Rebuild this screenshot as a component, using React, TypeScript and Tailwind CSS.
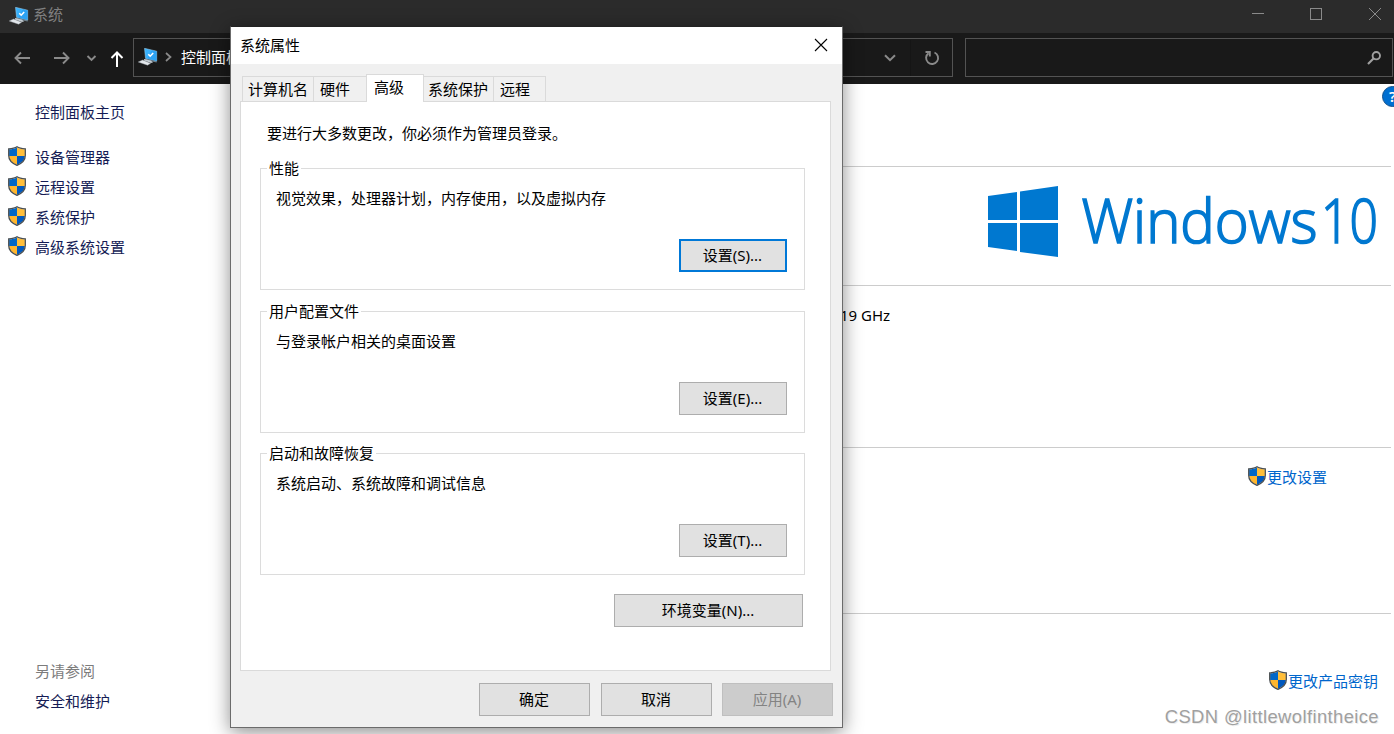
import type { ReactNode } from "react";

const ShieldIcon = () => (
  <svg width="18" height="20" viewBox="0 0 18 20" className="mb-[2px] shrink-0">
    <defs>
      <clipPath id="shield">
        <path d="M9 1.2C11 2.6 13.6 3.2 16.9 3.3V9.5C16.9 13.6 14 16.8 9 18.9C4 16.8 1.1 13.6 1.1 9.5V3.3C4.4 3.2 7 2.6 9 1.2Z" />
      </clipPath>
    </defs>
    <g clipPath="url(#shield)">
      <rect width="9" height="10" fill="#0067c8" />
      <rect x="9" width="9" height="10" fill="#ffbe3a" />
      <rect y="10" width="9" height="10" fill="#ffb62e" />
      <rect x="9" y="10" width="9" height="10" fill="#0058bd" />
    </g>
    <path
      d="M9 .8C11 2.2 13.6 2.7 17.3 2.8V9.5C17.3 13.8 14.2 17.2 9 19.3C3.8 17.2 .7 13.8 .7 9.5V2.8C4.4 2.7 7 2.2 9 .8Z"
      fill="none"
      stroke="#4a4f52"
      strokeWidth="1.3"
    />
  </svg>
);

const ComputerIcon = () => (
  <svg width="20" height="18" viewBox="0 0 20 18" className="mb-[2px] shrink-0">
    <path d="M6.5 .3L18.700 3.2V13.2L7.500 10.4Z" fill="#38b0fb" stroke="#a9d4ee" strokeWidth=".5" />
    <path d="M14 2.1L18.700 3.4V13L9 10.7Z" fill="#2499ee" opacity=".6" />
    <path d="M10.300 6.200L12.200 8.2L15.2 5" fill="none" stroke="#fff" strokeWidth="1.6" />
    <path d="M7 10.4L18.700 13.2V14.4L14 13.6L7 11.7Z" fill="#6d7f8b" />
    <path d="M6 10.9L12.5 12.6L15.2 14.2L13 15L6 12.6Z" fill="#c3ccd3" />
    <path d="M.2 14L4.6 12L12.6 15.3L9.600 17.2Z" fill="#e2e6ea" stroke="#9da5ac" strokeWidth=".4" />
  </svg>
);

const ChevronDown = () => (
  <svg width="12" height="8" viewBox="0 0 12 8" fill="none" stroke="#8a8a8a" strokeWidth="2">
    <path d="M1 1.2L6 6.2L11 1.2" />
  </svg>
);

const Button = ({ children, className }: { children: ReactNode; className: string }) => (
  <button className={`flex h-[33px] items-center justify-center pr-px pb-px ${className}`}>{children}</button>
);

const Group = ({ title, text, button, focused, className }: {
  title: string;
  text: string;
  button: string;
  focused?: boolean;
  className: string;
}) => (
  <section className={`flex h-[122px] w-[545px] flex-col border border-[#dcdcdc] ${className}`}>
    <h3 className="-mt-[11px] ml-[6px] h-5 self-start bg-white px-[2px] leading-5">{title}</h3>
    <p className="mt-[10px] ml-[15px] h-5 leading-5">{text}</p>
    <Button
      className={`mt-[31px] mr-[17px] w-[108px] self-end bg-[#e1e1e1] ${
        focused ? "border-2 border-[#0078d7]" : "border border-[#adadad]"
      }`}
    >
      {button}
    </Button>
  </section>
);

const sideLinks = ["设备管理器", "远程设置", "系统保护", "高级系统设置"];

const Toolbar = () => (
  <header className="text-[#8a8a8a]">
    <div className="flex h-[33px] items-center bg-[#2b2b2b] pl-[9px]">
      <ComputerIcon />
      <span className="ml-1 pb-[5px] text-[#808080]">系统</span>
      <svg className="mb-[5px] ml-auto" width="142" height="14" viewBox="0 0 142 14" fill="none" stroke="#8a8a8a">
        <path d="M0 6.5H12" />
        <rect x="58.5" y="1.5" width="11" height="11" />
        <path d="M117 1L129 13M129 1L117 13" />
      </svg>
    </div>
    <div className="flex h-[51px] items-center bg-[#191919] pb-[2px]">
      <svg width="133" height="20" viewBox="0 0 133 20" fill="none" stroke="#8a8a8a" strokeWidth="1.9">
        <path d="M30 10H15.5M21 4.5L15.5 10L21 15.5" />
        <path d="M54 10H68.5M63 4.5L68.5 10L63 15.5" />
        <path d="M87.5 8L91.5 12L95.5 8" />
        <path d="M117 19V4.5M111.5 10L117 4.5L122.500 10" stroke="#fff" strokeWidth="2" />
      </svg>
      <div className="flex h-[39px] w-[820px] items-center border border-[#535353] pl-1">
        <ComputerIcon />
        <svg className="mb-[2px] ml-[7px]" width="7" height="10" viewBox="0 0 7 10" fill="none" stroke="#8a8a8a" strokeWidth="1.7">
          <path d="M1 1L5.500 5L1 9" />
        </svg>
        <span className="ml-[9px] text-white">控制面板</span>
        <div className="ml-auto flex h-full items-center pt-px">
          <ChevronDown />
          <div className="ml-[14px] flex h-full w-[42px] items-center justify-center border-l border-[#151515]">
            <svg width="16" height="16" viewBox="0 0 16 16" fill="none" stroke="#8a8a8a" strokeWidth="1.9">
              <path d="M10.500 2.500A6 6 0 1 1 4.500 3.200" />
              <path d="M1.500 2H5.800V6.500" />
            </svg>
          </div>
        </div>
      </div>
      <div className="ml-3 flex h-[39px] w-[428px] items-center justify-end border border-[#535353] pr-[11px]">
        <svg width="14" height="14" viewBox="0 0 14 14" fill="none" stroke="#a0a0a0" strokeWidth="1.9">
          <circle cx="9.300" cy="4.700" r="3.700" />
          <path d="M6.500 7.500L1 13" strokeWidth="2.200" />
        </svg>
      </div>
    </div>
  </header>
);

const Sidebar = () => (
  <aside className="flex w-[230px] shrink-0 flex-col pt-[18px] pb-[18px] text-[#151c55]">
    <a className="ml-[35px] h-5 leading-5">控制面板主页</a>
    <nav className="mt-5">
      {sideLinks.map((link) => (
        <a key={link} className="flex h-[30px] items-center pl-2">
          <ShieldIcon />
          <span className="ml-[9px]">{link}</span>
        </a>
      ))}
    </nav>
    <div className="mt-auto ml-[35px] leading-[30px]">
      <p className="text-[#7c7c7c]">另请参阅</p>
      <a>安全和维护</a>
    </div>
  </aside>
);

const SystemInfo = () => (
  <main className="flex grow flex-col overflow-hidden">
    <div className="mr-[3px] flex h-[83px] items-start justify-end border-b border-[#ccc] pt-[2px]">
      <span className="-mr-[12px] flex size-[21px] shrink-0 items-center justify-center rounded-full border border-[#13508a] bg-[#006fd1] text-[15px] font-semibold text-white">
        ?
      </span>
    </div>
    <div className="mr-[3px] flex h-[119px] justify-end border-b border-[#ccc]">
      <svg width="403" height="118" viewBox="0 -18 403 118" fill="#0078d0">
        <path d="M0 11L29 7V35H0ZM32 6.500L70 1V35H32ZM0 38H29V66L0 62ZM32 38H70V72L32 67Z" />
        <g fontFamily="'Open Sans', 'Noto Sans', sans-serif" fontSize="60" fontWeight="300" stroke="#0078d0" strokeWidth="1.7">
          <text x="93.500" y="57.500" textLength="236" lengthAdjust="spacingAndGlyphs">
            Windows
          </text>
          <text x="333" y="57.500" textLength="57" lengthAdjust="spacingAndGlyphs">
            10
          </text>
        </g>
      </svg>
    </div>
    <div className="mr-[3px] h-[162px] border-b border-[#ccc] pt-[19px] pl-[610px] leading-5">19 GHz</div>
    <div className="mr-[3px] flex h-[166px] items-start justify-end border-b border-[#ccc] pt-[19px] pr-16 text-[#0066cc]">
      <a className="flex h-5 items-center"><ShieldIcon /><span className="ml-px">更改设置</span></a>
    </div>
    <div className="flex flex-col items-end pt-[57px] pr-4 text-[#0066cc]">
      <a className="flex h-5 items-center"><ShieldIcon /><span className="ml-px">更改产品密钥</span></a>
      <p className="mt-[14px] -mr-px font-['Liberation_Sans',sans-serif] text-[18.4px] leading-6 tracking-[0.4px] text-[#a0a0a0] [text-shadow:1px_1px_0_#eee]">
        CSDN @littlewolfintheice
      </p>
    </div>
  </main>
);

const PropertiesDialog = () => (
  <div className="absolute top-[26px] left-[230px] flex h-[702px] w-[613px] flex-col border border-[#6b6b6b] border-t-[#222] bg-[#f0f0f0] shadow-[0_4px_18px_rgba(0,0,0,0.45)]">
    <div className="flex h-[37px] shrink-0 items-center justify-between bg-white pr-[14px] pb-px pl-[9px]">
      <h2>系统属性</h2>
      <svg width="14" height="14" viewBox="0 0 14 14" stroke="#000" strokeWidth="1.1">
        <path d="M1 1L13 13M13 1L1 13" />
      </svg>
    </div>
    <div className="relative z-10 mt-[10px] -mb-px ml-[11px] flex h-[28px] items-end leading-[25px]">
      <span className="h-[26px] w-[71px] border-t border-l border-[#dadada] pl-[5px]">计算机名</span>
      <span className="h-[26px] w-[53px] border-t border-l border-[#dadada] pl-[6px]">硬件</span>
      <span className="h-[28px] w-[58px] border border-b-0 border-[#dadada] bg-white pl-[7px]">高级</span>
      <span className="h-[26px] w-[69px] border-t border-[#dadada] pl-1">系统保护</span>
      <span className="h-[26px] w-[53px] border-x border-t border-[#dadada] pl-[6px]">远程</span>
    </div>
    <div className="ml-[9px] flex h-[570px] w-[591px] shrink-0 flex-col border border-[#dadada] bg-white pl-[19px]">
      <p className="mt-[21px] ml-[7px] h-5 leading-5">要进行大多数更改，你必须作为管理员登录。</p>
      <Group className="mt-[25px]" title="性能" text="视觉效果，处理器计划，内存使用，以及虚拟内存" button="设置(S)..." focused />
      <Group className="mt-[21px]" title="用户配置文件" text="与登录帐户相关的桌面设置" button="设置(E)..." />
      <Group className="mt-5" title="启动和故障恢复" text="系统启动、系统故障和调试信息" button="设置(T)..." />
      <Button className="mt-[19px] mr-[27px] w-[189px] self-end border border-[#adadad] bg-[#e1e1e1]">环境变量(N)...</Button>
    </div>
    <div className="mt-3 flex pl-[248px]">
      <Button className="w-[111px] border border-[#adadad] bg-[#e1e1e1]">确定</Button>
      <Button className="ml-[11px] w-[111px] border border-[#adadad] bg-[#e1e1e1]">取消</Button>
      <Button className="ml-[10px] w-[111px] border border-[#bfbfbf] bg-[#ccc] text-[#838383]">应用(A)</Button>
    </div>
  </div>
);

const App = () => {
  return (
    <div className="relative flex h-[734px] w-[1394px] flex-col overflow-hidden bg-white font-['Noto_Sans','Noto_Sans_CJK_SC',sans-serif] text-[15px] text-black">
      <Toolbar />
      <div className="flex grow">
        <Sidebar />
        <SystemInfo />
      </div>
      <PropertiesDialog />
    </div>
  );
};

export default App;
